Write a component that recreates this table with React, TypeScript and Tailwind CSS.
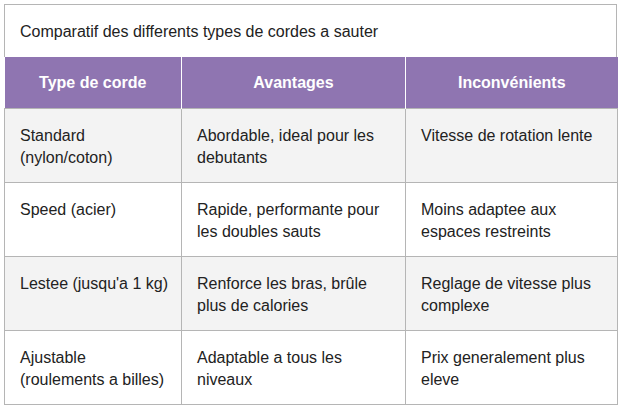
import React from "react";

const rows: [string[], string[], string[]][] = [
  [["Standard", "(nylon/coton)"], ["Abordable, ideal pour les", "debutants"], ["Vitesse de rotation lente"]],
  [["Speed (acier)"], ["Rapide, performante pour", "les doubles sauts"], ["Moins adaptee aux", "espaces restreints"]],
  [["Lestee (jusqu'a 1 kg)"], ["Renforce les bras, brûle", "plus de calories"], ["Reglage de vitesse plus", "complexe"]],
  [["Ajustable", "(roulements a billes)"], ["Adaptable a tous les", "niveaux"], ["Prix generalement plus", "eleve"]],
];

export default function App() {
  return (
    <div
      className="bg-white w-[623px] h-[410px] pt-[4px] pl-[4px] text-[#222]"
      style={{ fontFamily: '"Liberation Sans", Arial, sans-serif' }}
    >
      <div className="w-[613px]">
        <div className="h-[53px] border border-b-0 border-[#b5b5b5] flex items-center pl-[15px] pt-[1px] text-[16px]">
          Comparatif des differents types de cordes a sauter
        </div>
        <table className="w-[613px] border-collapse table-fixed text-[16px] leading-[22px]">
          <colgroup>
            <col className="w-[177px]" />
            <col className="w-[224px]" />
            <col className="w-[212px]" />
          </colgroup>
          <thead>
            <tr className="bg-[#8f75b1] text-white h-[51px]">
              <th className="font-bold text-center border-r border-white pt-[2px]">Type de corde</th>
              <th className="font-bold text-center border-r border-white pt-[2px]">Avantages</th>
              <th className="font-bold text-center pt-[2px]">Inconvénients</th>
            </tr>
          </thead>
          <tbody>
            {rows.map((r, i) => (
              <tr key={i} className={(i % 2 === 0 ? "bg-[#f3f3f3]" : "bg-white") + " h-[74px]"}>
                {r.map((c, j) => (
                  <td
                    key={j}
                    className="border border-[#b5b5b5] align-top px-[15px] pt-[16px] pb-[9px] font-normal whitespace-nowrap"
                  >
                    {c.map((line, k) => (
                      <div key={k}>{line}</div>
                    ))}
                  </td>
                ))}
              </tr>
            ))}
          </tbody>
        </table>
      </div>
    </div>
  );
}
